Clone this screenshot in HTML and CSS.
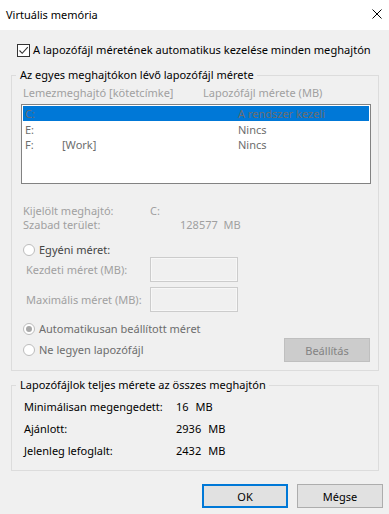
FILE: index.html
```html
<!DOCTYPE html>
<html lang="hu">
  <head>
    <meta charset="UTF-8" />
    <title>Virtuális memória</title>
    <link rel="stylesheet" href="styles.css">
  </head>
  <body>
    <div class="dialog">
      <div class="titlebar">
        <span class="title">Virtuális memória</span>
        <svg class="close" width="10" height="10" viewBox="0 0 10 10">
          <path d="M0.5 0.5 L9.5 9.5 M9.5 0.5 L0.5 9.5" stroke="#000" stroke-width="1" fill="none" />
        </svg>
      </div>

      <div class="main">
        <div class="check-row">
          <span class="checkbox">
            <svg width="11" height="11" viewBox="0 0 11 11">
              <path d="M1.5 5.5 L4.2 8.3 L9.8 2.2" stroke="#333" stroke-width="1.1" fill="none" />
            </svg>
          </span>
          <span>A lapozófájl méretének automatikus kezelése minden meghajtón</span>
        </div>

        <fieldset class="group group-drives">
          <legend>Az egyes meghajtókon lévő lapozófájl mérete</legend>

          <div class="col-heads">
            <span class="col-drive">Lemezmeghajtó [kötetcímke]</span>
            <span>Lapozófájl mérete (MB)</span>
          </div>

          <div class="listbox">
            <div class="list-row selected">
              <span class="c-letter">C:</span>
              <span class="c-label"></span>
              <span>A rendszer kezeli</span>
            </div>
            <div class="list-row second">
              <span class="c-letter">E:</span>
              <span class="c-label"></span>
              <span>Nincs</span>
            </div>
            <div class="list-row">
              <span class="c-letter">F:</span>
              <span class="c-label">[Work]</span>
              <span>Nincs</span>
            </div>
          </div>

          <div class="info">
            <span>Kijelölt meghajtó:</span>
            <span>C:</span>
            <span>Szabad terület:</span>
            <span class="free">128577&nbsp;&nbsp;MB</span>
          </div>

          <div class="radio-row custom">
            <span class="radio"></span>
            <span class="radio-text">Egyéni méret:</span>
          </div>

          <div class="field-row">
            <span class="field-label">Kezdeti méret (MB):</span>
            <span class="textbox"></span>
          </div>
          <div class="field-row second">
            <span class="field-label">Maximális méret (MB):</span>
            <span class="textbox"></span>
          </div>

          <div class="radio-row auto">
            <span class="radio checked"></span>
            <span>Automatikusan beállított méret</span>
          </div>

          <div class="radio-row none">
            <span class="radio"></span>
            <span>Ne legyen lapozófájl</span>
            <button class="btn btn-disabled">Beállítás</button>
          </div>
        </fieldset>

        <fieldset class="group group-totals">
          <legend>Lapozófájlok teljes mérete az összes meghajtón</legend>
          <div class="totals">
            <span>Minimálisan megengedett:</span>
            <span><span class="num">16</span>MB</span>
            <span>Ajánlott:</span>
            <span><span class="num">2936</span>MB</span>
            <span>Jelenleg lefoglalt:</span>
            <span><span class="num">2432</span>MB</span>
          </div>
        </fieldset>

        <div class="actions">
          <button class="btn btn-default">OK</button>
          <button class="btn">Mégse</button>
        </div>
      </div>
    </div>
  </body>
</html>
```

FILE: styles.css
```css
* {
  margin: 0;
  padding: 0;
  box-sizing: border-box;
}

body {
  font-family: "Noto Sans", "Open Sans", sans-serif;
  font-size: 11px;
  line-height: 16px;
  color: #000;
  background: #f0f0f0;
  white-space: nowrap;
}

.dialog {
  width: 389px;
  height: 514px;
  overflow: hidden;
}

.titlebar {
  height: 30px;
  background: #fff;
  display: flex;
  align-items: center;
  justify-content: space-between;
  padding: 0 7px 1px 6px;
}

.close {
  display: block;
  margin-top: -1px;
}

.check-row {
  display: flex;
  align-items: center;
  height: 16px;
  margin-top: 12px;
  padding-left: 17px;
  font-size: 11.1px;
}

.checkbox {
  width: 13px;
  height: 13px;
  border: 1px solid #333;
  background: #fff;
  display: flex;
  align-items: center;
  justify-content: center;
  margin-right: 3px;
}

.group {
  margin: 9px 0 0 11px;
  width: 368px;
  border: 1px solid #dcdcdc;
  min-width: 0;
}

.group legend {
  margin-left: 4px;
  padding: 0 3px 0 4px;
  line-height: 16px;
}

.col-heads {
  display: flex;
  height: 16px;
  margin-top: 2px;
  padding-left: 11px;
  color: #a0a0a0;
}

.col-drive {
  width: 180px;
}

.listbox {
  margin: 3px 0 0 9px;
  width: 350px;
  height: 80px;
  border: 1px solid #828282;
  background: #fff;
  padding: 1px;
  color: #6d6d6d;
}

.list-row {
  display: flex;
  height: 15px;
  line-height: 15px;
  padding-left: 2px;
}

.list-row.selected {
  background: #0078d7;
  color: #6d6d6d;
}

.list-row.second {
  margin-top: 1px;
}

.c-letter {
  width: 37px;
}

.c-label {
  width: 176px;
}

.info {
  display: grid;
  grid-template-columns: 127px auto;
  line-height: 14px;
  margin-top: 20px;
  padding-left: 11px;
  color: #a0a0a0;
}

.free {
  padding-left: 30px;
}

.radio-row {
  display: flex;
  align-items: center;
  padding-left: 11px;
  color: #6d6d6d;
}

.radio-text {
  color: #444;
}

.radio-row.custom {
  height: 14px;
  margin-top: 11px;
}

.radio-row.auto {
  height: 16px;
  margin-top: 9px;
}

.radio-row.none {
  height: 24px;
  margin-top: 1px;
  padding-right: 8px;
  margin-bottom: 8px;
}

.radio {
  width: 12px;
  height: 12px;
  border: 1px solid #bcbcbc;
  border-radius: 50%;
  background: #fff;
  margin-right: 4px;
  display: flex;
  align-items: center;
  justify-content: center;
}

.radio.checked::after {
  content: "";
  width: 6px;
  height: 6px;
  border-radius: 50%;
  background: #a8a8a8;
}

.field-row {
  display: flex;
  align-items: center;
  height: 25px;
  padding-left: 14px;
  color: #a0a0a0;
}

.field-row.second {
  margin-top: 5px;
}

.field-label {
  width: 124px;
}

.textbox {
  width: 88px;
  height: 25px;
  border: 1px solid #cccccc;
  box-shadow: inset 0 0 0 1px #f7f7f7;
  background: #f0f0f0;
}

.btn {
  width: 86px;
  height: 24px;
  font-family: inherit;
  font-size: 11px;
  background: #e1e1e1;
  border: 1px solid #adadad;
  color: #000;
}

.btn-disabled {
  margin-left: auto;
  background: #cccccc;
  border-color: #bfbfbf;
  color: #838383;
}

.btn-default {
  border: 2px solid #0078d7;
}

.group-totals {
  margin-top: 6px;
  padding-bottom: 8px;
}

.totals {
  display: grid;
  grid-template-columns: 152px auto;
  grid-auto-rows: 22px;
  align-items: center;
  margin-top: 3px;
  padding-left: 12px;
}

.num {
  margin-right: 7px;
}

.actions {
  display: flex;
  justify-content: flex-end;
  gap: 9px;
  margin-top: 13px;
  padding-right: 6px;
}
```
